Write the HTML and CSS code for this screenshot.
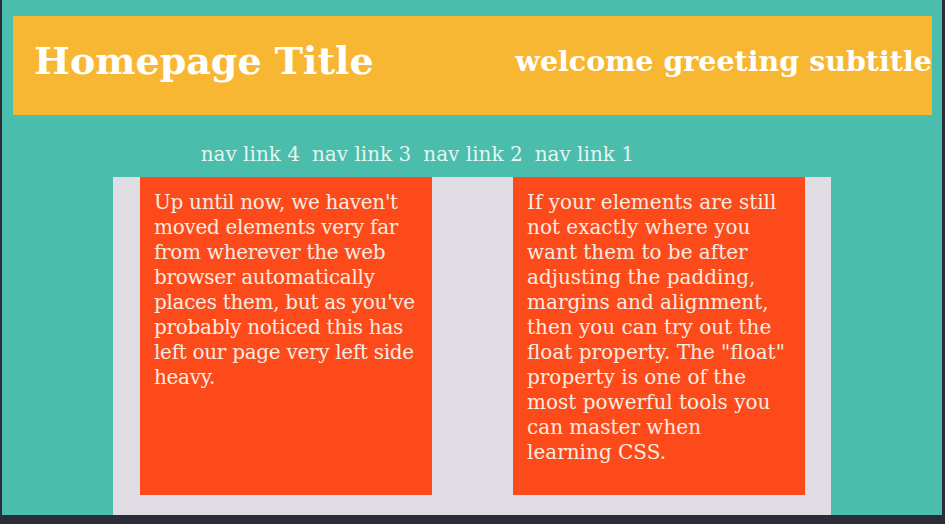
FILE: index.html
```html
<!DOCTYPE html>
<html>
<head>
<meta charset="utf-8">
<link rel="stylesheet" href="styles.css">
</head>
<body>
<div class="frame">
  <header class="header">
    <h1 class="title">Homepage Title</h1>
    <h2 class="subtitle">welcome greeting subtitle</h2>
  </header>
  <nav class="nav">
    <a class="nav-link">nav link 1</a>
    <a class="nav-link">nav link 2</a>
    <a class="nav-link">nav link 3</a>
    <a class="nav-link">nav link 4</a>
  </nav>
  <main class="content">
    <section class="card card-left">Up until now, we haven't moved elements very far from wherever the web browser automatically places them, but as you've probably noticed this has left our page very left side heavy.</section>
    <section class="card">If your elements are still not exactly where you want them to be after adjusting the padding, margins and alignment, then you can try out the float property. The "float" property is one of the most powerful tools you can master when learning CSS.</section>
  </main>
</div>
</body>
</html>
```

FILE: styles.css
```css
html, body {
  margin: 0;
  padding: 0;
  height: 100%;
}
body {
  background: #2b2c38;
  font-family: "DejaVu Serif", "Liberation Serif", serif;
  overflow: hidden;
}
.frame {
  margin: 0 3px 0 2px;
  height: 515px;
  background: #4abdac;
  padding: 16px 10px 0 11px;
  box-sizing: border-box;
  overflow: hidden;
}
.header {
  background: #f7b733;
  height: 99px;
  display: flex;
  align-items: flex-start;
  justify-content: space-between;
  padding: 0 0 0 21px;
  box-sizing: border-box;
}
.title {
  margin: 0;
  padding-top: 26px;
  color: #fff;
  font-size: 38px;
  line-height: 1;
  font-weight: bold;
}
.subtitle {
  margin: 0;
  padding-top: 31px;
  color: #fff;
  font-size: 28.5px;
  line-height: 1;
  font-weight: bold;
}
.nav {
  display: flex;
  flex-direction: row-reverse;
  justify-content: flex-start;
  gap: 12px;
  width: 621px;
  height: 62px;
  align-items: center;
  padding-top: 15px;
  box-sizing: border-box;
}
.nav-link {
  color: #e4f6f1;
  font-size: 20px;
}
.content {
  margin-left: 100px;
  width: 718px;
  height: 400px;
  background: #dfdce3;
  display: flex;
  gap: 81px;
  padding: 0 26px 0 27px;
  box-sizing: border-box;
}
.card {
  width: 292px;
  height: 318px;
  background: #fc4a1a;
  color: #f8ece2;
  font-size: 20px;
  line-height: 25px;
  padding: 13px 14px;
  box-sizing: border-box;
}
.card-left {
  padding-right: 10px;
  letter-spacing: -0.3px;
}
```
